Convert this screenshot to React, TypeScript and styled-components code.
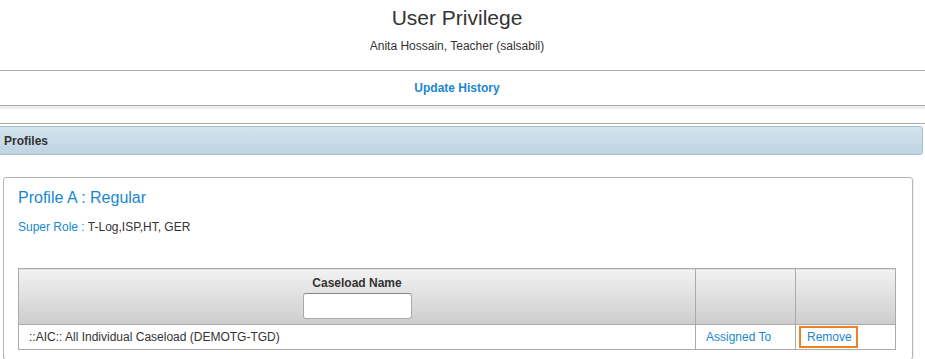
import * as React from 'react'
import styled, { createGlobalStyle } from 'styled-components'

const GlobalStyle = createGlobalStyle`
    body {
        margin: 0;
        background: #fff;
        font-family: "Liberation Sans", Arial, sans-serif;
        color: #333;
    }
`

const Page = styled.div`
    width: 925px;
    overflow: hidden;
`

const Header = styled.header`
    width: 914px;
    text-align: center;
    padding-top: 5px;
    height: 65px;
`

const Title = styled.h1`
    margin: 0;
    font-size: 21px;
    font-weight: normal;
    line-height: 26px;
    color: #333;
`

const Subtitle = styled.div`
    margin-top: 8px;
    font-size: 12px;
    line-height: 14px;
`

const HistoryBar = styled.div`
    height: 34px;
    border-top: 1px solid #aaa;
    border-bottom: 1px solid #aaa;
    display: flex;
    align-items: center;
    justify-content: center;
    padding-right: 11px;
`

const Link = styled.a<{ bold?: boolean }>`
    color: #1a87cf;
    font-size: 12px;
    font-weight: ${props => (props.bold ? 'bold' : 'normal')};
    text-decoration: none;
    cursor: pointer;
`

const FocusedLink = styled(Link)`
    display: inline-block;
    padding: 2px 4px 2px 6px;
    border: 2px solid #ec8424;
    line-height: 14px;
`

const Spacer = styled.div`
    height: 14px;
    border-top: 3px solid #eee;
    border-bottom: 1px solid #aaa;
`

const SectionBar = styled.div`
    margin: 2px 2px 0 -4px;
    height: 27px;
    border: 1px solid #a9bdcc;
    border-radius: 3px;
    background: linear-gradient(to bottom, #d5e5f0, #bfd3e1);
    display: flex;
    align-items: center;
    padding-left: 7px;
    font-size: 12px;
    font-weight: bold;
    color: #333;
`

const Card = styled.section`
    margin: 22px 12px 0 3px;
    border: 1px solid #b5b5b5;
    border-radius: 3px;
    padding: 10px 16px 9px 14px;
    box-shadow: 1px 1px 2px rgba(0, 0, 0, 0.08);
`

const ProfileTitle = styled.h2`
    margin: 0;
    font-size: 16px;
    font-weight: normal;
    line-height: 20px;
    color: #1a87cf;
`

const RoleLine = styled.div`
    margin-top: 12px;
    font-size: 12px;
    line-height: 14px;
    color: #333;
`

const RoleLabel = styled.span`
    color: #1a87cf;
`

const Table = styled.table`
    margin-top: 34px;
    width: 100%;
    border-collapse: collapse;
    font-size: 12px;
`

const HeadCell = styled.th<{ width?: number }>`
    width: ${props => (props.width ? `${props.width}px` : 'auto')};
    height: 48px;
    border: 1px solid #aaa;
    background: linear-gradient(to bottom, #f2f2f2, #cdcdcd);
    font-weight: bold;
    color: #333;
    vertical-align: top;
    padding: 7px 0 0;
`

const FilterInput = styled.input`
    display: block;
    margin: 3px auto 0;
    width: 109px;
    height: 26px;
    box-sizing: border-box;
    border: 1px solid #aaa;
    border-top-color: #888;
    border-radius: 3px;
    background: #fff;
`

const Cell = styled.td<{ tight?: boolean }>`
    height: 24px;
    border: 1px solid #aaa;
    padding: 0 ${props => (props.tight ? '3px' : '10px')};
    color: #333;
`

const App: React.FunctionComponent = () => (
    <Page>
        <GlobalStyle />
        <Header>
            <Title>User Privilege</Title>
            <Subtitle>Anita Hossain, Teacher (salsabil)</Subtitle>
        </Header>
        <HistoryBar>
            <Link bold>Update History</Link>
        </HistoryBar>
        <Spacer />
        <SectionBar>Profiles</SectionBar>
        <Card>
            <ProfileTitle>Profile A : Regular</ProfileTitle>
            <RoleLine>
                <RoleLabel>Super Role :</RoleLabel> T-Log,ISP,HT, GER
            </RoleLine>
            <Table>
                <thead>
                    <tr>
                        <HeadCell>
                            Caseload Name
                            <FilterInput type="text" />
                        </HeadCell>
                        <HeadCell width={99} />
                        <HeadCell width={99} />
                    </tr>
                </thead>
                <tbody>
                    <tr>
                        <Cell>::AIC:: All Individual Caseload (DEMOTG-TGD)</Cell>
                        <Cell>
                            <Link>Assigned To</Link>
                        </Cell>
                        <Cell tight>
                            <FocusedLink>Remove</FocusedLink>
                        </Cell>
                    </tr>
                </tbody>
            </Table>
        </Card>
    </Page>
)

export default App
